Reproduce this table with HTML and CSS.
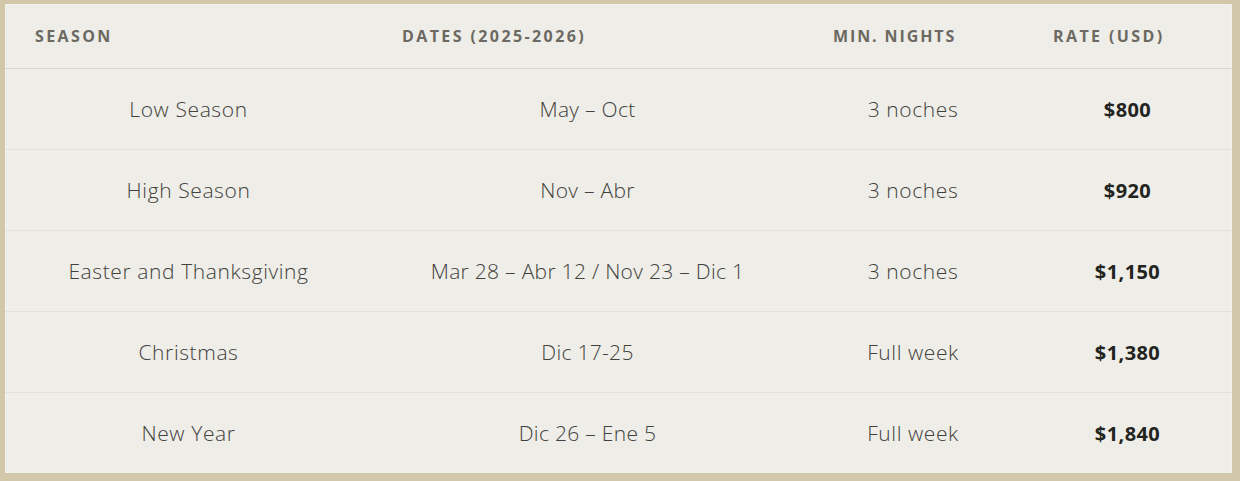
FILE: index.html
```html
<!DOCTYPE html>
<html>
<head>
<meta charset="utf-8">
<link rel="stylesheet" href="styles.css">
</head>
<body>
<div class="frame">
<table class="rates">
  <colgroup>
    <col class="c1"><col class="c2"><col class="c3"><col class="c4">
  </colgroup>
  <thead>
    <tr><th>Season</th><th>Dates (2025-2026)</th><th>Min. Nights</th><th>Rate (USD)</th></tr>
  </thead>
  <tbody>
    <tr><td>Low Season</td><td class="dates">May – Oct</td><td>3 noches</td><td class="rate">$800</td></tr>
    <tr><td>High Season</td><td class="dates">Nov – Abr</td><td>3 noches</td><td class="rate">$920</td></tr>
    <tr><td>Easter and Thanksgiving</td><td class="dates">Mar 28 – Abr 12 / Nov 23 – Dic 1</td><td>3 noches</td><td class="rate">$1,150</td></tr>
    <tr><td>Christmas</td><td class="dates">Dic 17-25</td><td>Full week</td><td class="rate">$1,380</td></tr>
    <tr><td>New Year</td><td class="dates">Dic 26 – Ene 5</td><td>Full week</td><td class="rate">$1,840</td></tr>
  </tbody>
</table>
</div>
</body>
</html>
```
FILE: styles.css
```css
html, body {
  margin: 0;
  padding: 0;
  background: #d3c7a9;
}
body {
  padding: 4px 8px 7px 5px;
  font-family: "Open Sans", "Liberation Sans", sans-serif;
}
.frame {
  width: 1227px;
  background: #eeede8;
  box-shadow: inset 0 0 0 1px #f3f1ec;
}
.rates {
  width: 1227px;
  border-collapse: collapse;
  table-layout: fixed;
}
.c1 { width: 367px; }
.c2 { width: 431px; }
.c3 { width: 220px; }
.c4 { width: 209px; }
.rates th {
  height: 64px;
  padding: 0 0 0 30px;
  text-align: left;
  font-size: 16px;
  font-weight: 700;
  letter-spacing: 2.4px;
  text-transform: uppercase;
  color: #6b6961;
  border-bottom: 1px solid #dcd9cf;
}
.rates th:nth-child(3) { letter-spacing: 1.9px; }
.rates td {
  height: 80px;
  padding: 0;
  text-align: center;
  font-size: 21px;
  font-weight: 300;
  letter-spacing: 0.6px;
  color: #42413b;
  border-bottom: 1px solid #e3e1da;
}
.rates td.dates { letter-spacing: 0.3px; }
.rates tbody tr:last-child td { border-bottom: none; }
.rates td.rate {
  font-size: 20px;
  font-weight: 700;
  letter-spacing: 0.4px;
  color: #24241f;
}
```
